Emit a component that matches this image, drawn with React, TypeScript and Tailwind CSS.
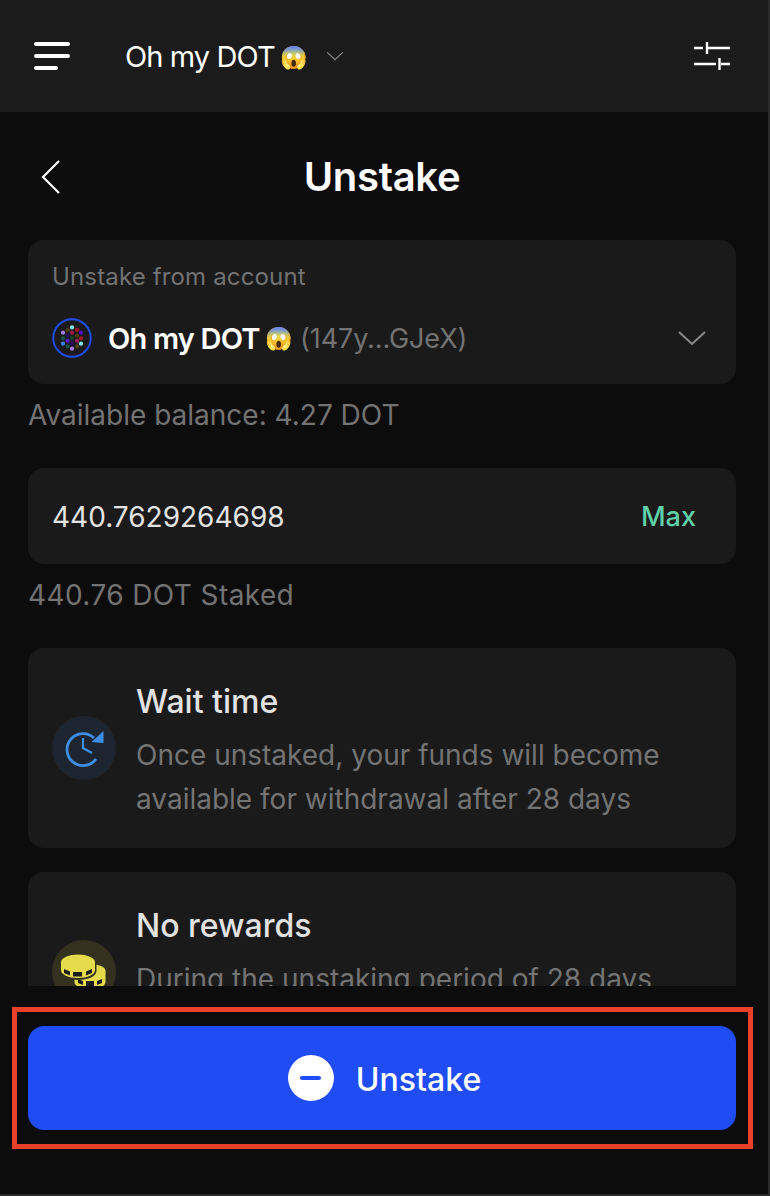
import React from "react";

const font = { fontFamily: '"Inter", "Noto Color Emoji", sans-serif' };

const dots: [number, number, string][] = [
  [32, 15, "#7fe3ee"],
  [25, 19, "#4a3d12"],
  [40, 19, "#a3161f"],
  [17.6, 23.5, "#a77ce0"],
  [32, 23.5, "#a11a4d"],
  [46.4, 23.5, "#4f12c9"],
  [25, 28, "#2a0f5c"],
  [40, 28, "#4f3d10"],
  [17.6, 32.5, "#14513f"],
  [32, 32, "#14431f"],
  [46.4, 32.5, "#a3161f"],
  [25, 36.5, "#5a14d6"],
  [40, 36.5, "#a11a5d"],
  [17.6, 41, "#2f7de8"],
  [32, 41, "#2a0f5c"],
  [46.4, 41, "#7fe3ee"],
  [25, 45.5, "#14513f"],
  [40, 45.5, "#4a3d12"],
  [32, 49, "#a77ce0"],
];

function AccountIcon() {
  return (
    <svg width="40" height="40" viewBox="0 0 64 64" className="shrink-0">
      <circle cx="32" cy="32" r="30" fill="none" stroke="#1f4cf5" strokeWidth="3" />
      {dots.map(([cx, cy, fill], i) => (
        <circle key={i} cx={cx} cy={cy} r="3.4" fill={fill} />
      ))}
    </svg>
  );
}

function Chevron({ className }: { className: string }) {
  return (
    <svg viewBox="0 0 30 16" fill="none" className={className}>
      <path d="M2 2l13 12L28 2" stroke="currentColor" strokeWidth="2" />
    </svg>
  );
}

function ClockIcon() {
  return (
    <svg width="64" height="64" viewBox="0 0 64 64" fill="none">
      <path d="M42 22A16 16 0 1 0 44 43" stroke="#3d8fe6" strokeWidth="2.8" />
      <path d="M31 22V32L40 37" stroke="#3d8fe6" strokeWidth="2.2" />
      <path d="M51.500 15V27L39.500 26Z" fill="#3d8fe6" />
    </svg>
  );
}

function CoinsIcon() {
  return (
    <svg width="64" height="64" viewBox="0 0 64 64">
      <ellipse cx="38" cy="31" rx="15.500" ry="7" fill="#e6dc4b" />
      <path d="M22.500 31h31v11c0 4-7 8-15.500 8s-15.500-4-15.500-8z" fill="#e6dc4b" />
      <path d="M26 39l5 2v4l-5-2zM34 41h8v5h-8zM45 41l5-2v4l-5 2z" fill="#1c1c1c" />
      <path d="M7.500 22c0-4 8-8 18.500-8s18.500 4 18.500 8v9c0 5-8 9-18.500 9S7.500 36 7.500 31z" fill="#34321f" />
      <ellipse cx="26" cy="22" rx="17" ry="7.500" fill="#e6dc4b" />
      <path d="M9 22h34v8c0 4.500-7.500 8-17 8S9 34.500 9 30z" fill="#e6dc4b" />
      <path d="M12 29l6 2.500v4l-6-2.500zM21 32h9v4.500h-9zM34 31.500l6-2.500v4l-6 2.500z" fill="#1c1c1c" />
    </svg>
  );
}

export default function App() {
  return (
    <div className="w-[770px] h-[1196px] bg-[#2a2a2a]">
      <div style={font} className="w-[768px] h-[1194px] bg-[#0c0c0c] flex flex-col overflow-hidden">
        <header className="h-[112px] shrink-0 bg-[#1b1b1b] flex items-center pl-[34px] pr-[38px]">
          <div className="flex flex-col gap-[8px] w-[36px]">
            <span className="h-[4px] w-[36px] rounded-full bg-white"></span>
            <span className="h-[4px] w-[36px] rounded-full bg-white"></span>
            <span className="h-[4px] w-[24px] rounded-full bg-white"></span>
          </div>
          <div className="ml-[55px] pt-[2px] flex items-center text-white text-[29px] tracking-[-0.9px]">
            Oh my DOT<span className="ml-[6px] text-[22px]">😱</span>
          </div>
          <Chevron className="ml-[19px] w-[18px] h-[10px] text-[#8a8a8a]" />
          <svg width="36" height="30" viewBox="0 0 36 30" fill="none" className="ml-auto" stroke="white" strokeWidth="2.4">
            <path d="M0 7h9M14 7h22M13 1v12M0 23h22M27 23h9M25.500 17v12" />
          </svg>
        </header>

        <main className="flex-1 min-h-0 overflow-hidden pl-[28px] pr-[32px]">
          <div className="relative h-[128px] pt-[2px] flex items-center justify-center">
            <svg width="20" height="34" viewBox="0 0 20 34" fill="none" className="absolute left-[13px] top-[48px]">
              <path d="M18 1L2 17l16 16" stroke="white" strokeWidth="2.2" />
            </svg>
            <h1 className="text-white text-[40px] font-semibold tracking-[-0.3px]">Unstake</h1>
          </div>

          <section className="h-[144px] rounded-[16px] bg-[#1a1a1a] px-[24px] pt-[21px]">
            <div className="text-[24px] leading-[32px] tracking-[0.15px] text-[#737373]">Unstake from account</div>
            <div className="mt-[25px] flex items-center h-[40px]">
              <AccountIcon />
              <span className="ml-[16px] pt-[2px] text-[29px] font-semibold tracking-[-0.8px] text-white">Oh my DOT</span>
              <span className="ml-[6px] text-[22px]">😱</span>
              <span className="ml-[7px] pt-[2px] text-[27px] tracking-[-0.1px] text-[#737373]">(147y...GJeX)</span>
              <Chevron className="ml-auto mr-[5px] w-[30px] h-[16px] text-[#8a8a8a]" />
            </div>
          </section>
          <div className="mt-[14px] text-[28px] leading-[34px] text-[#737373]">Available balance: 4.27 DOT</div>

          <section className="mt-[36px] h-[96px] rounded-[16px] bg-[#1a1a1a] px-[24px] pt-[2px] flex items-center justify-between">
            <span className="text-[28px] text-[#e4e4e4]">440.7629264698</span>
            <span className="mr-[16px] text-[27px] font-medium text-[#5fd0a8]">Max</span>
          </section>
          <div className="mt-[14px] text-[28px] leading-[34px] tracking-[0.4px] text-[#737373]">440.76 DOT Staked</div>

          <section className="mt-[36px] h-[200px] rounded-[16px] bg-[#1a1a1a] px-[24px] flex items-center gap-[20px]">
            <div className="w-[64px] h-[64px] rounded-full bg-[#1c2530] shrink-0">
              <ClockIcon />
            </div>
            <div className="pt-[6px]">
              <div className="text-[32px] leading-[40px] font-medium text-[#e2e2e2]">Wait time</div>
              <div className="mt-[11px] text-[28px] leading-[44px] text-[#747474]">
                Once unstaked, your funds will become
                <br />
                available for withdrawal after 28 days
              </div>
            </div>
          </section>

          <section className="mt-[24px] h-[200px] rounded-[16px] bg-[#1a1a1a] px-[24px] flex items-center gap-[20px]">
            <div className="w-[64px] h-[64px] rounded-full bg-[#34321f] shrink-0">
              <CoinsIcon />
            </div>
            <div className="pt-[6px]">
              <div className="text-[32px] leading-[40px] font-medium text-[#e2e2e2]">No rewards</div>
              <div className="mt-[11px] text-[28px] leading-[44px] text-[#747474]">
                During the unstaking period of 28 days,
                <br />
                your funds do not earn rewards
              </div>
            </div>
          </section>
        </main>

        <footer className="h-[208px] shrink-0 pt-[21px] pl-[12px]">
          <div className="w-[741px] h-[142px] border-[5px] border-[#e8412a] px-[11px] pt-[14px]">
            <button className="w-[708px] h-[104px] rounded-[16px] bg-[#1f4cf5] pl-[5px] flex items-center justify-center gap-[22px] text-white">
              <span className="w-[46px] h-[46px] rounded-full bg-white flex items-center justify-center">
                <span className="w-[21px] h-[4px] rounded-full bg-[#1f4cf5]"></span>
              </span>
              <span className="pt-[4px] text-[32px] font-medium">Unstake</span>
            </button>
          </div>
        </footer>
      </div>
    </div>
  );
}
